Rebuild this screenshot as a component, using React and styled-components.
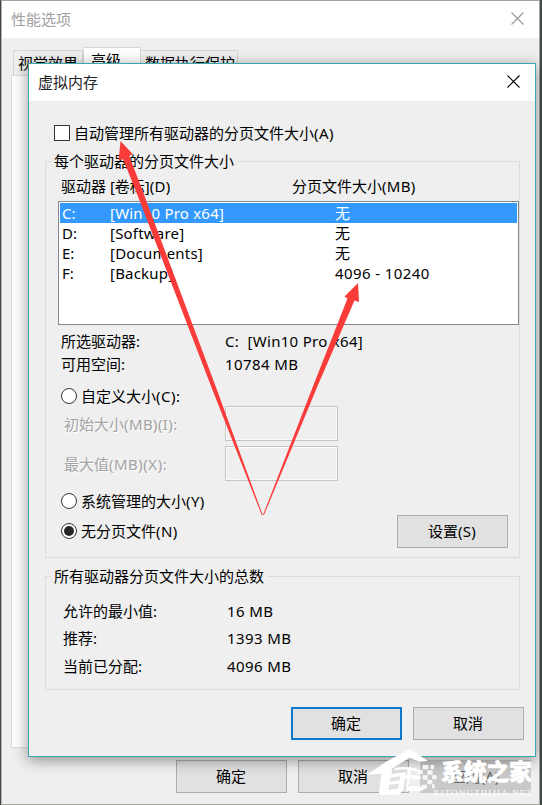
import React from 'react';
import styled, { createGlobalStyle, css } from 'styled-components';

const Global = createGlobalStyle`
  * { box-sizing: border-box; }
  body {
    margin: 0;
    overflow: hidden;
    background: #4a514c;
    font: 15px/20px "Noto Sans", "Noto Sans CJK SC", sans-serif;
    color: #000;
  }
`;

const Desktop = styled.div`
  position: relative;
  width: 542px;
  height: 805px;
  padding: 0 2px 0 1px;
  overflow: hidden;
  background: linear-gradient(90deg, #444 0 50%, #3f4a42 50%);
`;

const OuterWindow = styled.main`
  display: flex;
  flex-direction: column;
  height: 805px;
  border: 1px solid #a5a5a5;
  border-left-color: #b5b5b5;
  border-bottom-color: #a9a89d;
  background: #efefef;
`;

const TitleBar = styled.header`
  display: flex;
  flex: none;
  align-items: center;
  justify-content: space-between;
  height: 37px;
  padding: ${(p) => (p.$muted ? '0 15px 2px 9px' : '0 15px 2px 9px')};
  background: #fff;
  color: ${(p) => (p.$muted ? '#a0a0a0' : '#222')};
`;

const CloseIcon = styled.svg`
  width: 13px;
  height: 13px;
  fill: none;
  stroke: ${(p) => (p.$muted ? '#999' : '#000')};
  stroke-width: 1.1;
`;

const Tabs = styled.nav`
  display: flex;
  align-items: flex-end;
  height: 37px;
  padding-left: 11px;
`;

const Tab = styled.span`
  width: ${(p) => p.$w}px;
  height: ${(p) => (p.$active ? 28 : 25)}px;
  padding: ${(p) => (p.$active ? '2px 0 0 7px' : '2px 0 0 4px')};
  border: 1px solid #d5d5d5;
  border-bottom: 0;
  border-left-width: ${(p) => (p.$w === 97 ? 0 : 1)}px;
  background: ${(p) => (p.$active ? '#fff' : '#efefef')};
  white-space: nowrap;
`;

const TabPanel = styled.div`
  width: 515px;
  height: 673px;
  margin-left: 9px;
  border: 1px solid #dcdcdc;
  background: #fff;
`;

const OuterActions = styled.footer`
  display: flex;
  gap: 11px;
  padding: 12px 0 0 174px;
`;

const Button = styled.button`
  width: 111px;
  height: 33px;
  padding: 0 1px 1px 0;
  border: 1px solid #adadad;
  background: #e1e1e1;
  color: inherit;
  font: inherit;
  ${(p) => p.$primary && css`border: 2px solid #1078cf;`}
  ${(p) => p.$disabled && css`
    border-color: #c9c9c9;
    background: #c9c9c9;
    color: #666;
  `}
`;

const Dialog = styled.section`
  position: absolute;
  left: 28px;
  top: 63px;
  width: 508px;
  height: 694px;
  border: 1px solid #3aa6ad;
  background: #efefef;
  box-shadow: 0 3px 14px rgba(0, 0, 0, 0.42);
`;

const DialogBody = styled.div`
  padding: 22px 11px 0 16px;
`;

const AutoRow = styled.label`
  display: flex;
  align-items: center;
  gap: 4px;
  height: 20px;
  margin: 0 0 18px 9px;
`;

const Latin = styled.span`
  letter-spacing: ${(p) => p.$track || 0.3}px;
`;

const CheckBox = styled.span`
  width: 16px;
  height: 16px;
  border: 1px solid #333;
  background: #fff;
`;

const Group = styled.div`
  width: 475px;
  height: ${(p) => p.$h}px;
  margin-bottom: ${(p) => p.$gap}px;
  border: 1px solid #dcdcdc;
`;

const Legend = styled.h2`
  width: max-content;
  height: 20px;
  margin: -11px 0 0 5px;
  padding: 0 3px;
  background: #efefef;
  font: inherit;
`;

const ListHead = styled.div`
  display: grid;
  grid-template-columns: 231px 1fr;
  margin: 5px 0 5px 15px;
`;

const DriveList = styled.div`
  width: 461px;
  height: 124px;
  margin: 0 0 5px 12px;
  padding: 1px;
  border: 1px solid #828790;
  background: #fff;
`;

const DriveRow = styled.div`
  display: grid;
  grid-template-columns: 48px 225px 1fr;
  height: 20px;
  padding-left: 2px;
  line-height: 20px;
  background: ${(p) => (p.$selected ? '#3399ff' : 'transparent')};
  color: ${(p) => (p.$selected ? '#fff' : '#000')};
`;

const InfoRow = styled.div`
  display: grid;
  grid-template-columns: 164px 1fr;
  align-items: center;
  height: ${(p) => p.$h}px;
  padding-left: ${(p) => p.$indent}px;
`;

const InfoBlock = styled.div`
  display: grid;
  gap: ${(p) => p.$gap || 0}px;
  margin-top: ${(p) => p.$top || 0}px;
`;

const Choice = styled.label`
  display: flex;
  align-items: center;
  gap: 4px;
  height: 20px;
  margin: ${(p) => p.$m || 0};
`;

const Dot = styled.span`
  display: grid;
  place-items: center;
  width: 16px;
  height: 16px;
  border: 1px solid #333;
  border-radius: 50%;
  background: #fff;
  &::after {
    content: "";
    width: 10px;
    height: 10px;
    border-radius: 50%;
    background: ${(p) => (p.$on ? '#262626' : 'transparent')};
  }
`;

const FieldRow = styled.div`
  display: grid;
  grid-template-columns: 161px 113px;
  align-items: center;
  height: 35px;
  margin-bottom: 5px;
  padding-left: 18px;
  color: #a3a3a3;
  text-shadow: 1px 1px #fff;
`;

const Field = styled.span`
  height: 35px;
  border: 1px solid #c6c6c6;
  box-shadow: inset 0 0 0 1px #f9f9f9;
`;

const SetRow = styled.div`
  display: flex;
  align-items: center;
  justify-content: space-between;
  height: 33px;
  margin-top: 4px;
  padding: 0 11px 0 15px;
`;

const DialogActions = styled.footer`
  display: flex;
  justify-content: flex-end;
  gap: 11px;
`;

const Overlay = styled.svg`
  position: absolute;
  inset: 0;
  width: 542px;
  height: 805px;
  pointer-events: none;
`;

const drives = [
  ['C:', '[Win10 Pro x64]', '无'],
  ['D:', '[Software]', '无'],
  ['E:', '[Documents]', '无'],
  ['F:', '[Backup]', '4096 - 10240'],
];

const totals = [
  ['允许的最小值:', '16 MB'],
  ['推荐:', '1393 MB'],
  ['当前已分配:', '4096 MB'],
];

const Close = ({ muted }) => (
  <CloseIcon $muted={muted} viewBox="0 0 13 13">
    <path d="M.5 .5l12 12M12.5 .5l-12 12" />
  </CloseIcon>
);

const Arrows = () => (
  <Overlay viewBox="0 0 542 805" fill="#f93c3a">
    <path d="M120.500 141L132.700 154L129.300 156L142.300 190L217 390L262.700 515L261.700 515L212.500 390L135.500 190L123 159L118.700 160.500Z" />
    <path d="M358 283L359 302L354.500 300.500L318 385L264 515L263 515L313.500 385L347.500 298.500L344.500 296.500Z" />
  </Overlay>
);

const Watermark = () => (
  <Overlay viewBox="0 0 542 805" fill="#fff">
    <g transform="translate(364 745) scale(.33333)">
      <path d="M8 90L70 48L138 12L192 48L168 50L137 38L82 72L84 84L72 90H60L54 86Z" />
      <path d="M54 76L84 72L73 134H86L84 148L50 151Q44 150 45 142Z" />
      <path d="M76 88L126 82L118 134L106 148L80 150V134L102 132L105 116L74 120V110L107 106L109 94L76 98Z" />
      <path d="M92 68Q128 62 162 72L158 80Q130 70 92 76Z" />
      <path d="M124 91Q150 88 172 96L166 105Q144 98 122 101Z" />
      <path d="M131 67L141 68L134 124H166L184 132L166 139L126 138Z" />
      <path d="M176 60h17v13h-17zM160 75h16v13h-16zM200 60h10v12h-10zM190 76h16v13h-16zM176 91h15v13h-15zM205 91h13v12h-13zM190 105h15v13h-15zM172 119h17v12h-17zM204 118h8v12h-8z" opacity=".85" />
    </g>
    <text x="441" y="780" fontSize="23" fontWeight="900" stroke="#fff" strokeWidth=".5" textLength="91">系统之家</text>
    <text x="433" y="796" fontSize="9" fontFamily="Liberation Serif" textLength="99">XITONGZHIJIA.NET</text>
  </Overlay>
);

export default function App() {
  return (
    <Desktop>
      <Global />
      <OuterWindow>
        <TitleBar $muted>性能选项<Close muted /></TitleBar>
        <Tabs>
          <Tab $w={70}>视觉效果</Tab>
          <Tab $w={58} $active>高级</Tab>
          <Tab $w={97}>数据执行保护</Tab>
        </Tabs>
        <TabPanel />
        <OuterActions>
          <Button>确定</Button>
          <Button>取消</Button>
          <Button $disabled>应用(A)</Button>
        </OuterActions>
      </OuterWindow>
      <Dialog>
        <TitleBar>虚拟内存<Close /></TitleBar>
        <DialogBody>
          <AutoRow><CheckBox /><span>自动管理所有驱动器的分页文件大小<Latin $track={0.5}>(A)</Latin></span></AutoRow>
          <Group $h={397} $gap={18}>
            <Legend>每个驱动器的分页文件大小</Legend>
            <ListHead>
              <span>驱动器 [卷标]<Latin>(D)</Latin></span>
              <span>分页文件大小<Latin>(MB)</Latin></span>
            </ListHead>
            <DriveList>
              {drives.map(([letter, name, size], i) => (
                <DriveRow key={letter} $selected={i === 0}>
                  <span>{letter}</span><Latin $track={0.2}>{name}</Latin><Latin $track={0.4}>{size}</Latin>
                </DriveRow>
              ))}
            </DriveList>
            <InfoBlock $gap={1}>
              <InfoRow $h={22} $indent={15}><span>所选驱动器:</span><Latin>C:&nbsp; [Win10 Pro x64]</Latin></InfoRow>
              <InfoRow $h={22} $indent={15}><span>可用空间:</span><Latin $track={0.4}>10784 MB</Latin></InfoRow>
            </InfoBlock>
            <Choice $m="11px 0 0 15px"><Dot /><span>自定义大小<Latin $track={0.5}>(C):</Latin></span></Choice>
            <FieldRow><span>初始大小<Latin $track={0.4}>(MB)(I):</Latin></span><Field /></FieldRow>
            <FieldRow><span>最大值<Latin $track={0.5}>(MB)(X):</Latin></span><Field /></FieldRow>
            <Choice $m="10px 0 0 15px"><Dot /><span>系统管理的大小<Latin $track={0.4}>(Y)</Latin></span></Choice>
            <SetRow>
              <Choice $m="0 0 2px"><Dot $on /><span>无分页文件<Latin $track={0.4}>(N)</Latin></span></Choice>
              <Button>设置<Latin>(S)</Latin></Button>
            </SetRow>
          </Group>
          <Group $h={114} $gap={17}>
            <Legend>所有驱动器分页文件大小的总数</Legend>
            <InfoBlock $top={11}>
              {totals.map(([label, value]) => (
                <InfoRow key={label} $h={27.5} $indent={17}><span>{label}</span><Latin $track={0.4}>{value}</Latin></InfoRow>
              ))}
            </InfoBlock>
          </Group>
          <DialogActions>
            <Button $primary>确定</Button>
            <Button>取消</Button>
          </DialogActions>
        </DialogBody>
      </Dialog>
      <Watermark />
      <Arrows />
    </Desktop>
  );
}
